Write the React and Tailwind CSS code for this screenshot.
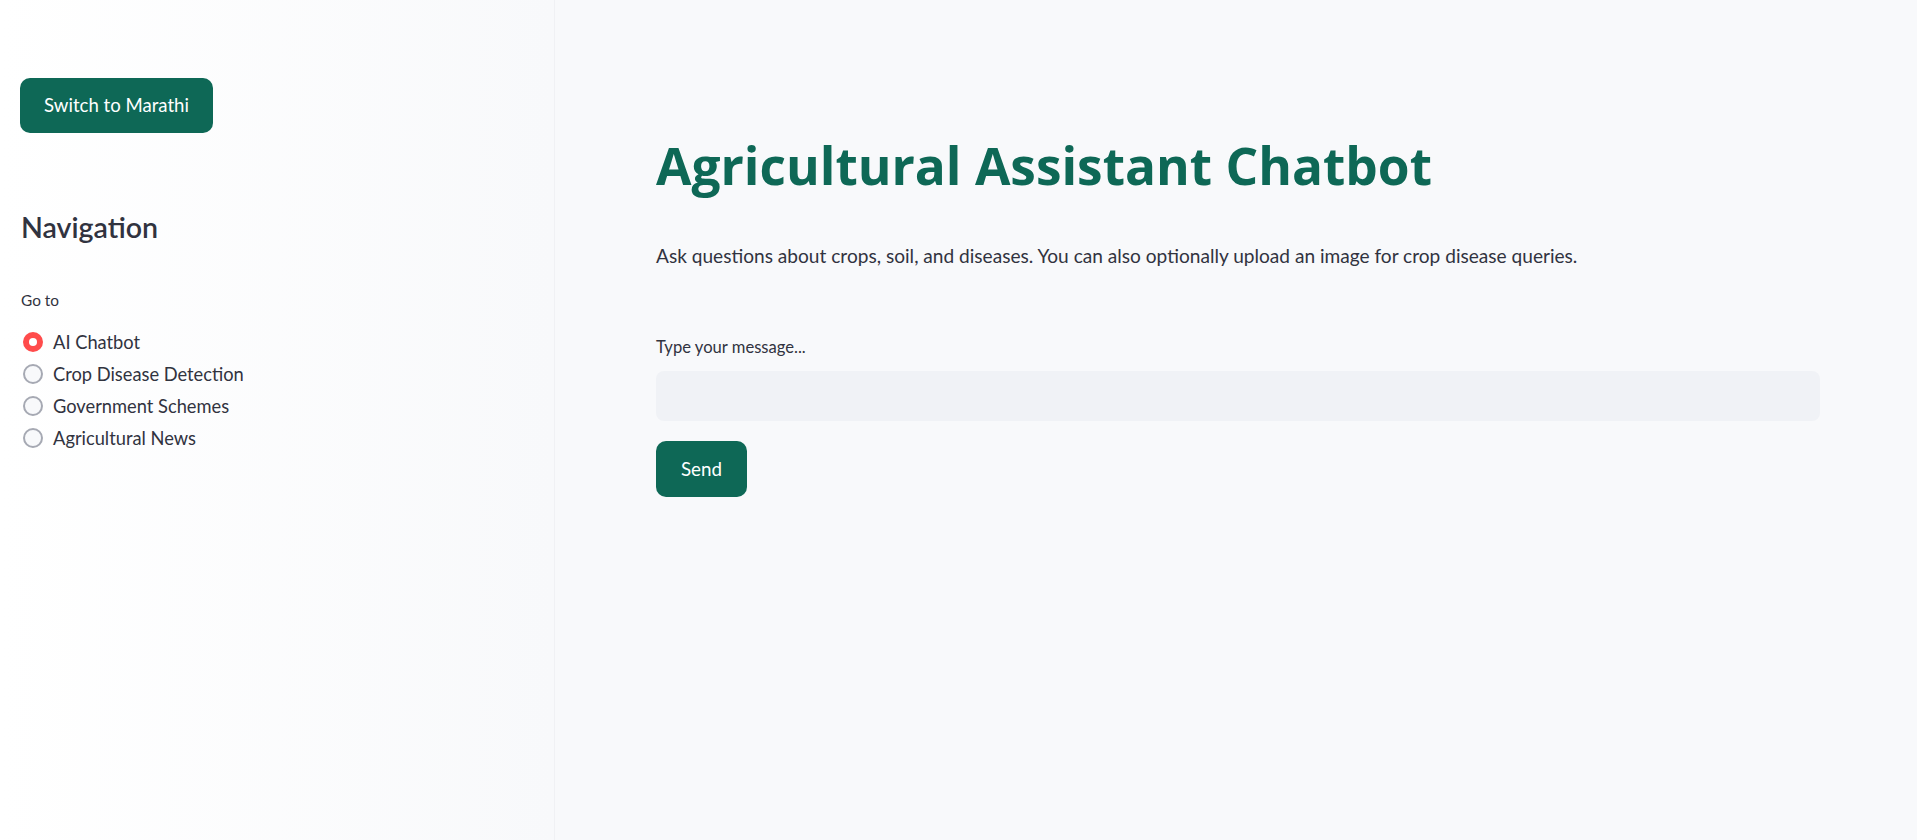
import React from "react";

const items = ["AI Chatbot", "Crop Disease Detection", "Government Schemes", "Agricultural News"];

function Radio({ label, selected }) {
  return (
    <div className="flex h-[32px] items-center">
      {selected ? (
        <div className="ml-[3px] flex h-[20px] w-[20px] items-center justify-center rounded-full bg-[#ff4b4b]">
          <div className="h-[8px] w-[8px] rounded-full bg-white" />
        </div>
      ) : (
        <div className="ml-[3px] h-[20px] w-[20px] rounded-full border-2 border-[#a6a9b3] bg-[#f8f9fb]" />
      )}
      <span className="ml-[10px] text-[18.3px] leading-[32px] text-[#31333f]">{label}</span>
    </div>
  );
}

export default function App() {
  return (
    <div className="flex min-h-[840px] w-full bg-[#f8f9fb] font-['Lato',sans-serif] text-[#31333f]">
      <aside className="flex w-[555px] shrink-0 flex-col border-r border-[#f0f1f4] bg-gradient-to-r from-[#ffffff] to-[#f8f9fb] pl-[20px] pt-[78px]">
        <button className="flex h-[55px] w-[193px] items-center justify-center rounded-[10px] bg-[#0e6856] text-[18.6px] text-white">
          Switch to Marathi
        </button>
        <h2 className="mt-[76px] ml-[1px] text-[28.6px] font-semibold leading-[36px] text-[#31333f]">Navigation</h2>
        <div className="mt-[45px] ml-[1px] text-[15.4px] leading-[20px] text-[#31333f]">Go to</div>
        <div className="mt-[16px] flex flex-col">
          {items.map((it, i) => (
            <Radio key={it} label={it} selected={i === 0} />
          ))}
        </div>
      </aside>
      <main className="flex flex-1 pl-[101px]">
        <div className="flex w-[1164px] flex-col pt-[133px]">
          <h1 className="font-['Open_Sans',sans-serif] text-[51.4px] font-bold leading-[64px] text-[#0e6856]">
            Agricultural Assistant Chatbot
          </h1>
          <p className="mt-[45px] text-[19.1px] leading-[28px]">
            Ask questions about crops, soil, and diseases. You can also optionally upload an image for crop disease queries.
          </p>
          <label className="mt-[66px] text-[16.6px] leading-[22px]">Type your message...</label>
          <input
            type="text"
            className="mt-[13px] h-[50px] w-full rounded-[8px] bg-[#f0f2f6] px-4 text-[19px] outline-none"
          />
          <div className="mt-[20px]">
            <button className="flex h-[56px] w-[91px] items-center justify-center rounded-[10px] bg-[#0e6856] text-[18.8px] text-white">
              Send
            </button>
          </div>
        </div>
      </main>
    </div>
  );
}
